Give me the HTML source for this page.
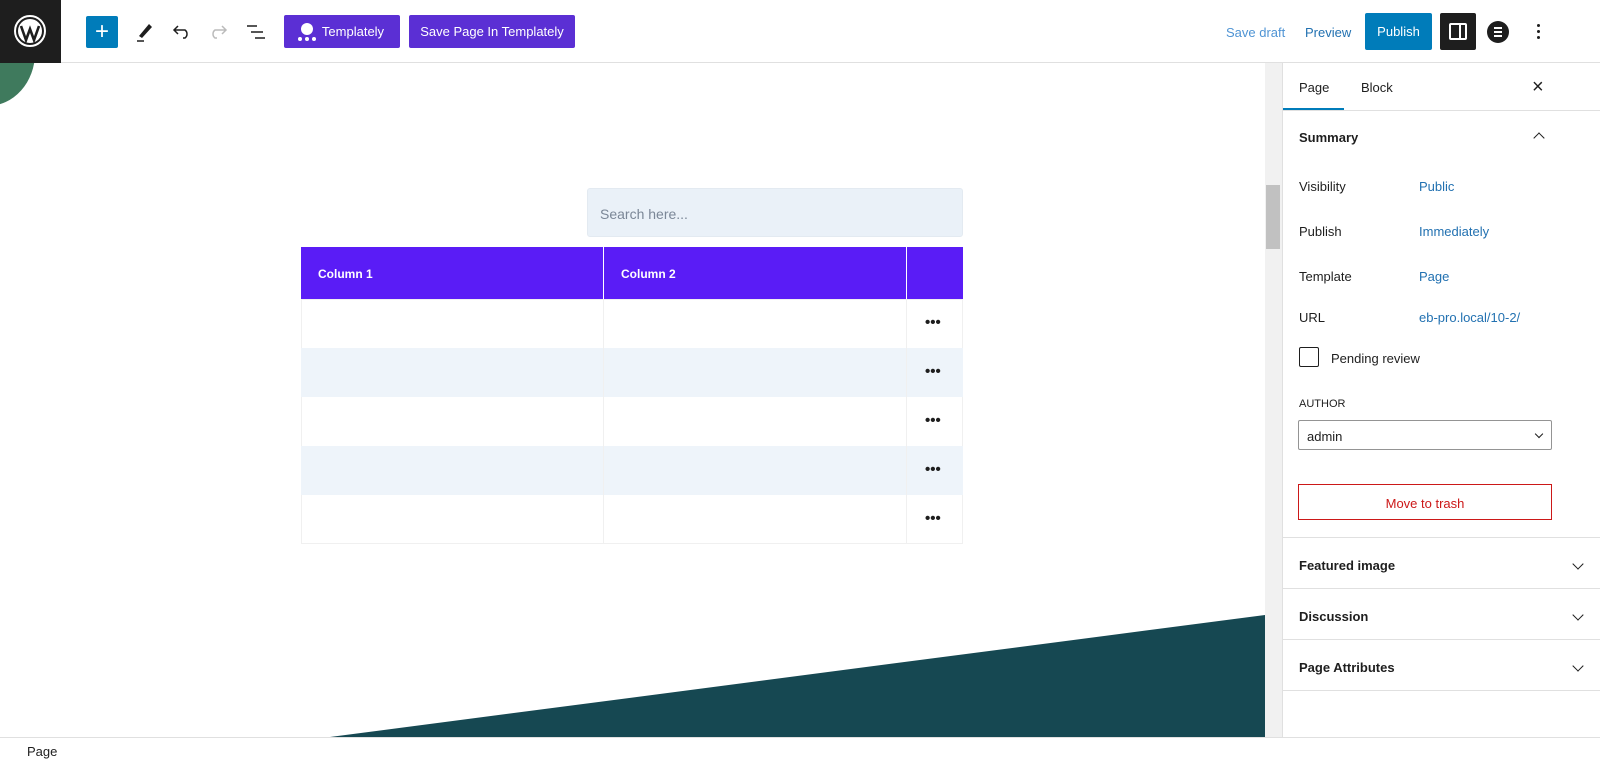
<!DOCTYPE html>
<html><head><style>
*{box-sizing:border-box;margin:0;padding:0}
body{width:1600px;height:777px;overflow:hidden;background:#fff;font-family:"Liberation Sans",sans-serif;font-size:13px;color:#1e1e1e;position:relative}
.abs{position:absolute}
.top{left:0;top:0;width:1600px;height:63px;border-bottom:1px solid #e0e0e0;background:#fff}
.btn{position:absolute;border-radius:2px;color:#fff;font-size:13px;display:flex;align-items:center;justify-content:center}
.side .row{position:absolute;left:1299px;font-size:13px;color:#1e1e1e}
.side .val{position:absolute;left:1419px;font-size:13px;color:#2271b1}
.sec{position:absolute;left:1283px;width:317px;border-top:1px solid #e0e0e0;height:51px;padding:20px 16px;font-weight:bold;font-size:13px}
.chev{position:absolute;right:18px;top:22px;width:8px;height:8px;border-right:1.5px solid #1e1e1e;border-bottom:1.5px solid #1e1e1e;transform:rotate(45deg)}
.dots{position:absolute;left:925px;font-size:15px;font-weight:bold;letter-spacing:0px;line-height:10px}
</style></head><body>
<div class="abs" style="left:-60px;top:0;width:95px;height:106px;border-radius:50%;background:#3f7a5d"></div>
<svg class="abs" style="left:0;top:0" width="1265" height="737"><polygon points="330,737 1265,615 1265,737" fill="#164852"/></svg>
<div class="top"></div>
<div class="abs" style="left:0;top:0;width:61px;height:63px;background:#1e1e1e"></div>
<svg class="abs" style="left:13px;top:14px" width="34" height="34" viewBox="0 0 34 34"><circle cx="17" cy="17" r="15" fill="none" stroke="#fff" stroke-width="2"/><circle cx="17" cy="17" r="12" fill="#fff"/><path d="M8 12 L13 26 L17 15 L21 26 L26 12" stroke="#1e1e1e" stroke-width="2.6" fill="none"/></svg>
<div class="btn" style="left:86px;top:16px;width:32px;height:32px;background:#007cba;font-size:24px">+</div>
<svg class="abs" style="left:134px;top:20px" width="22" height="24"><path d="M5 16 L15 4 L18 7 L8 18 Z" fill="#1e1e1e"/><path d="M3 21 H10" stroke="#1e1e1e" stroke-width="1.5"/></svg>
<svg class="abs" style="left:171px;top:22px" width="22" height="20"><path d="M3 8 H14 A5 5 0 0 1 14 16 H12 M7 4 L3 8 L7 12" stroke="#1e1e1e" stroke-width="1.5" fill="none"/></svg>
<svg class="abs" style="left:207px;top:22px" width="22" height="20"><path d="M19 8 H8 A5 5 0 0 0 8 16 H10 M15 4 L19 8 L15 12" stroke="#bbb" stroke-width="1.5" fill="none"/></svg>
<svg class="abs" style="left:245px;top:22px" width="22" height="20"><path d="M2 4 H12 M6 10 H18 M10 16 H20" stroke="#1e1e1e" stroke-width="1.6"/></svg>
<div class="btn" style="left:284px;top:15px;width:116px;height:33px;background:#5b2fd4;padding-left:22px">Templately</div>
<svg class="abs" style="left:296px;top:21px" width="22" height="22"><circle cx="11" cy="8" r="6" fill="#fff"/><circle cx="4" cy="18" r="2" fill="#fff"/><circle cx="11" cy="18" r="2" fill="#fff"/><circle cx="18" cy="18" r="2" fill="#fff"/></svg>
<div class="btn" style="left:409px;top:15px;width:166px;height:33px;background:#5b2fd4">Save Page In Templately</div>
<div class="abs" style="left:1226px;top:25px;color:#4f94d4">Save draft</div>
<div class="abs" style="left:1305px;top:25px;color:#2271b1">Preview</div>
<div class="btn" style="left:1365px;top:13px;width:67px;height:37px;background:#007cba">Publish</div>
<div class="abs" style="left:1440px;top:13px;width:36px;height:37px;background:#1e1e1e;border-radius:2px"></div>
<div class="abs" style="left:1449px;top:23px;width:18px;height:17px;border:2px solid #fff;border-radius:2px"></div>
<div class="abs" style="left:1459px;top:23px;width:2px;height:17px;background:#fff"></div>
<div class="abs" style="left:1487px;top:21px;width:22px;height:22px;border-radius:50%;background:#1e1e1e"></div>
<div class="abs" style="left:1494px;top:27px;width:8px;height:2px;background:#fff;box-shadow:0 4px #fff,0 8px #fff"></div>
<div class="abs" style="left:1537px;top:24px;width:3px;height:3px;background:#1e1e1e;border-radius:50%;box-shadow:0 6px #1e1e1e,0 12px #1e1e1e"></div>
<div class="abs" style="left:1265px;top:63px;width:17px;height:674px;background:#f1f1f1"></div>
<div class="abs" style="left:1266px;top:185px;width:14px;height:64px;background:#c1c1c1"></div>
<div class="abs" style="left:587px;top:188px;width:376px;height:49px;background:#eaf1f8;border:1px solid #e3eaf1;border-radius:3px;padding:17px 12px;color:#7b8797;font-size:14px">Search here...</div>
<div class="abs" style="left:301px;top:247px;width:662px;height:52px;background:#5a1cf6"></div>
<div class="abs" style="left:603px;top:247px;width:1px;height:52px;background:#fff"></div>
<div class="abs" style="left:906px;top:247px;width:1px;height:52px;background:#fff"></div>
<div class="abs" style="left:318px;top:267px;color:#fff;font-weight:bold;font-size:12px">Column 1</div>
<div class="abs" style="left:621px;top:267px;color:#fff;font-weight:bold;font-size:12px">Column 2</div>
<div class="abs" style="left:301px;top:299px;width:662px;height:245px;border:1px solid #f0f0f0"></div>
<div class="abs" style="left:301px;top:348px;width:662px;height:49px;background:#eef4fa"></div>
<div class="abs" style="left:301px;top:446px;width:662px;height:49px;background:#eef4fa"></div>
<div class="abs" style="left:603px;top:299px;width:1px;height:245px;background:#f0f0f0"></div>
<div class="abs" style="left:906px;top:299px;width:1px;height:245px;background:#f0f0f0"></div>
<div class="dots" style="top:318px">•••</div>
<div class="dots" style="top:367px">•••</div>
<div class="dots" style="top:416px">•••</div>
<div class="dots" style="top:465px">•••</div>
<div class="dots" style="top:514px">•••</div>
<div class="side">
<div class="abs" style="left:1282px;top:63px;width:1px;height:674px;background:#e0e0e0"></div>
<div class="abs" style="left:1299px;top:80px">Page</div>
<div class="abs" style="left:1283px;top:108px;width:61px;height:2px;background:#007cba"></div>
<div class="abs" style="left:1361px;top:80px">Block</div>
<div class="abs" style="left:1532px;top:76px;font-size:20px">×</div>
<div class="abs" style="left:1283px;top:110px;width:317px;height:1px;background:#e0e0e0"></div>
<div class="abs" style="left:1299px;top:130px;font-weight:bold">Summary</div>
<div class="abs" style="left:1535px;top:134px;width:8px;height:8px;border-left:1.5px solid #1e1e1e;border-top:1.5px solid #1e1e1e;transform:rotate(45deg)"></div>
<div class="row" style="top:179px">Visibility</div><div class="val" style="top:179px">Public</div>
<div class="row" style="top:224px">Publish</div><div class="val" style="top:224px">Immediately</div>
<div class="row" style="top:269px">Template</div><div class="val" style="top:269px">Page</div>
<div class="row" style="top:310px">URL</div><div class="val" style="top:310px">eb-pro.local/10-2/</div>
<div class="abs" style="left:1299px;top:347px;width:20px;height:20px;border:1px solid #1e1e1e;border-radius:2px"></div>
<div class="row" style="top:351px;left:1331px">Pending review</div>
<div class="row" style="top:398px;font-size:11px">AUTHOR</div>
<div class="abs" style="left:1298px;top:420px;width:254px;height:30px;border:1px solid #949494;border-radius:2px;padding:8px;font-size:13px">admin</div>
<div class="abs" style="left:1536px;top:431px;width:6px;height:6px;border-right:1.5px solid #1e1e1e;border-bottom:1.5px solid #1e1e1e;transform:rotate(45deg)"></div>
<div class="abs" style="left:1298px;top:484px;width:254px;height:36px;border:1px solid #cc1818;color:#cc1818;text-align:center;padding-top:11px">Move to trash</div>
<div class="sec" style="top:537px">Featured image<span class="chev"></span></div>
<div class="sec" style="top:588px">Discussion<span class="chev"></span></div>
<div class="sec" style="top:639px">Page Attributes<span class="chev"></span></div>
<div class="abs" style="left:1283px;top:690px;width:317px;height:1px;background:#e0e0e0"></div>
</div>
<div class="abs" style="left:0;top:737px;width:1600px;height:40px;background:#fff;border-top:1px solid #e0e0e0"></div>
<div class="abs" style="left:27px;top:744px;font-size:13px">Page</div>
</body></html>
